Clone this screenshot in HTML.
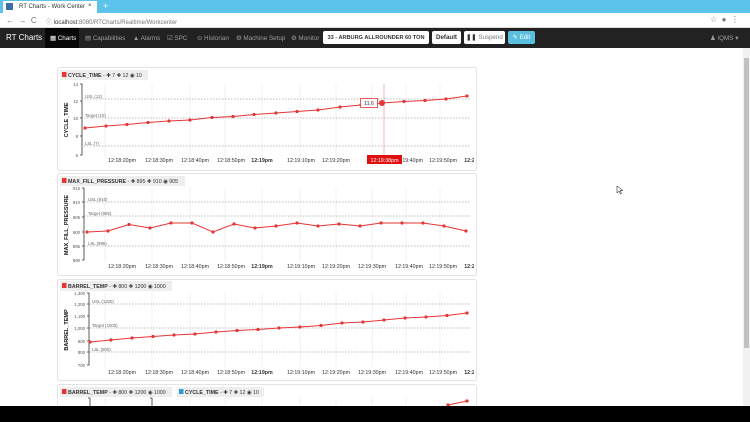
<!DOCTYPE html>
<html><head><meta charset="utf-8"><style>
*{margin:0;padding:0;box-sizing:border-box}
body{width:750px;height:422px;overflow:hidden;background:#fff;font-family:"Liberation Sans",sans-serif;position:relative}
.abs{position:absolute}
.tabbar{left:0;top:0;width:750px;height:13px;background:#5cc3ea}
.tab{left:3px;top:1px;width:94px;height:12px;background:#fff;font-size:6px;color:#333;padding:3px 0 0 16px}
.addr{left:0;top:13px;width:750px;height:15px;background:#fff;border-bottom:1px solid #ddd;font-size:6px;color:#777}
.nav{left:0;top:28px;width:750px;height:20px;background:#222;color:#9d9d9d;font-size:6.3px}
.nav span{position:absolute;top:7px}
.btn{position:absolute;top:3px;height:13px;background:#fff;border-radius:2px;color:#333;font-size:6.2px;font-weight:bold;padding-top:3px;text-align:center;white-space:nowrap}
.scroll{left:743px;top:48px;width:7px;height:358px;background:#f1f1f1}
.black{left:0;top:406px;width:750px;height:16px;background:#000}
</style></head><body>
<div class="abs tabbar"></div>
<div class="abs tab">RT Charts - Work Center<span style="position:absolute;left:85px;top:2px">×</span></div>
<div class="abs" style="left:6px;top:3px;width:7px;height:7px;background:#3a6ea5"></div>
<div class="abs" style="left:103px;top:1px;color:#fff;font-size:9px">+</div>
<div class="abs addr"><span class="abs" style="left:6px;top:3px;font-size:8px">← &nbsp;→ &nbsp;C</span><span class="abs" style="left:46px;top:4px">ⓘ <b style="color:#333;font-weight:normal">localhost</b>:8080/RTCharts/Realtime/Workcenter</span><span class="abs" style="left:710px;top:2px;font-size:8px">☆ &nbsp;● &nbsp;⋮</span></div>
<div class="abs nav">
<span style="left:6px;top:5px;color:#fff;font-size:8px">RT Charts</span>
<div class="abs" style="left:45px;top:0;width:34px;height:20px;background:#080808"></div>
<span style="left:50px;color:#fff">▦ Charts</span>
<span style="left:85px">▤ Capabilities</span>
<span style="left:133px">▲ Alarms</span>
<span style="left:167px">☑ SPC</span>
<span style="left:197px">⊙ Historian</span>
<span style="left:236px">⚙ Machine Setup</span>
<span style="left:291px">⚙ Monitor</span>
<div class="btn" style="left:323px;width:106px;font-size:5.6px;padding-top:3.5px">33 - ARBURG ALLROUNDER 60 TON</div>
<div class="btn" style="left:432px;width:29px">Default</div>
<div class="btn" style="left:464px;width:41px;font-weight:normal;color:#777"><b style="color:#333">❚❚</b> Suspend</div>
<div class="btn" style="left:508px;width:27px;background:#5bc0de;color:#fff;font-weight:normal">✎ Edit</div>
<span style="left:710px">♟ IQMS ▾</span>
</div>
<div class="abs scroll"><div style="position:absolute;left:1px;top:10px;width:5px;height:290px;background:#c1c1c1"></div></div>
<svg class="abs" style="left:0;top:0" width="750" height="406" font-family="Liberation Sans, sans-serif">
<defs><marker id="m" markerWidth="4" markerHeight="4" refX="2" refY="2" markerUnits="userSpaceOnUse"><circle cx="2" cy="2" r="1.6" fill="#e53535"/></marker>
<clipPath id="c"><rect x="0" y="0" width="474" height="406"/></clipPath></defs>
<g fill="#fff" stroke="#e4e4e4">
<rect x="57.5" y="67.5" width="419" height="103" rx="2"/>
<rect x="57.5" y="173.5" width="419" height="102" rx="2"/>
<rect x="57.5" y="279.5" width="419" height="101" rx="2"/>
<rect x="57.5" y="384.5" width="419" height="30" rx="2"/>
</g>
<g font-size="5.3" fill="#333">
<rect x="60" y="70" width="88" height="10" fill="#eee"/><rect x="62" y="72" width="4.5" height="5" fill="#e53535"/>
<text x="68" y="77"><tspan font-weight="bold">CYCLE_TIME</tspan> - ✚ 7 ✚ 12 ◉ 10</text>
<rect x="60" y="176" width="125" height="10" fill="#eee"/><rect x="62" y="178" width="4.5" height="5" fill="#e53535"/>
<text x="68" y="183"><tspan font-weight="bold">MAX_FILL_PRESSURE</tspan> - ✚ 895 ✚ 910 ◉ 905</text>
<rect x="60" y="281" width="112" height="10" fill="#eee"/><rect x="62" y="283" width="4.5" height="5" fill="#e53535"/>
<text x="68" y="288"><tspan font-weight="bold">BARREL_TEMP</tspan> - ✚ 800 ✚ 1200 ◉ 1000</text>
<rect x="60" y="387" width="112" height="10" fill="#eee"/><rect x="62" y="389" width="4.5" height="5" fill="#e53535"/>
<text x="68" y="394"><tspan font-weight="bold">BARREL_TEMP</tspan> - ✚ 800 ✚ 1200 ◉ 1000</text>
<rect x="177" y="387" width="87" height="10" fill="#eee"/><rect x="179" y="389" width="4.5" height="5" fill="#2a9fd6"/>
<text x="185" y="394"><tspan font-weight="bold">CYCLE_TIME</tspan> - ✚ 7 ✚ 12 ◉ 10</text>
</g>
<g stroke="#f0f0f0">
<path d="M105 84V158M152 84V158M190 84V158M225 84V158M262 84V158M300 84V158M336 84V158M372 84V158M406 84V158M440 84V158"/>
<path d="M105 188V262M152 188V262M190 188V262M225 188V262M262 188V262M300 188V262M336 188V262M372 188V262M406 188V262M440 188V262"/>
<path d="M105 293V367M152 293V367M190 293V367M225 293V367M262 293V367M300 293V367M336 293V367M372 293V367M406 293V367M440 293V367"/>
<path d="M105 398V406M152 398V406M190 398V406M225 398V406M262 398V406M300 398V406M336 398V406M372 398V406M406 398V406M440 398V406"/>
</g>
<g stroke="#bbb" stroke-dasharray="1.5,1.5">
<path d="M84 99H470M84 118H470M84 146H470"/>
<path d="M84 202H470M84 216H470M84 246H470"/>
<path d="M90 304H470M90 328H470M90 352H470"/>
</g>
<g fill="#666" font-size="4.3">
<text x="85" y="98">USL (12)</text><text x="85" y="117">Target (10)</text><text x="85" y="145">LSL (7)</text>
<text x="88" y="201">USL (910)</text><text x="88" y="215">Target (905)</text><text x="88" y="245">LSL (895)</text>
<text x="92" y="303">USL (1200)</text><text x="92" y="327">Target (1000)</text><text x="92" y="351">LSL (800)</text>
</g>
<g stroke="#333" stroke-width="0.8" fill="none">
<path d="M80 84H82V155H80M82 101H80M82 118H80M82 136H80"/>
<path d="M82 188H84V260H82M84 202H82M84 217H82M84 232H82M84 246H82"/>
<path d="M87 293H89V365H87M89 304H87M89 316H87M89 328H87M89 341H87M89 352H87"/>
<path d="M88 398H90V406M150 398H152V406"/>
</g>
<g fill="#555" font-size="4.3" text-anchor="end">
<text x="78" y="86">14</text><text x="78" y="103">12</text><text x="78" y="120">10</text><text x="78" y="138">8</text><text x="78" y="157">6</text>
<text x="80" y="190">915</text><text x="80" y="204">910</text><text x="80" y="219">905</text><text x="80" y="234">900</text><text x="80" y="248">895</text><text x="80" y="262">890</text>
<text x="85" y="295">1,300</text><text x="85" y="306">1,200</text><text x="85" y="318">1,100</text><text x="85" y="330">1,000</text><text x="85" y="343">900</text><text x="85" y="354">800</text><text x="85" y="367">700</text>
</g>
<g fill="#111" font-size="5.5" font-weight="bold">
<text transform="translate(68,120) rotate(-90)" text-anchor="middle">CYCLE_TIME</text>
<text transform="translate(68,225) rotate(-90)" text-anchor="middle">MAX_FILL_PRESSURE</text>
<text transform="translate(68,330) rotate(-90)" text-anchor="middle">BARREL_TEMP</text>
</g>
<g fill="#333" font-size="5.3" text-anchor="middle" clip-path="url(#c)">
<text x="122" y="162">12:18:20pm</text><text x="159" y="162">12:18:30pm</text><text x="195" y="162">12:18:40pm</text><text x="231" y="162">12:18:50pm</text><text x="262" y="162" font-weight="bold">12:19pm</text><text x="301" y="162">12:19:10pm</text><text x="336" y="162">12:19:20pm</text><text x="409" y="162">12:19:40pm</text><text x="443" y="162">12:19:50pm</text><text x="471" y="162" font-weight="bold">12:20</text>
<text x="122" y="268">12:18:20pm</text><text x="159" y="268">12:18:30pm</text><text x="195" y="268">12:18:40pm</text><text x="231" y="268">12:18:50pm</text><text x="262" y="268" font-weight="bold">12:19pm</text><text x="301" y="268">12:19:10pm</text><text x="336" y="268">12:19:20pm</text><text x="372" y="268">12:19:30pm</text><text x="409" y="268">12:19:40pm</text><text x="443" y="268">12:19:50pm</text><text x="471" y="268" font-weight="bold">12:20</text>
<text x="122" y="374">12:18:20pm</text><text x="159" y="374">12:18:30pm</text><text x="195" y="374">12:18:40pm</text><text x="231" y="374">12:18:50pm</text><text x="262" y="374" font-weight="bold">12:19pm</text><text x="301" y="374">12:19:10pm</text><text x="336" y="374">12:19:20pm</text><text x="372" y="374">12:19:30pm</text><text x="409" y="374">12:19:40pm</text><text x="443" y="374">12:19:50pm</text><text x="471" y="374" font-weight="bold">12:20</text>
</g>
<g fill="none" stroke="#e53535" stroke-width="1" marker-start="url(#m)" marker-mid="url(#m)" marker-end="url(#m)">
<polyline points="85,128 106,126 127,124.5 148,122.5 169,121 190,120 212,117.5 233,116.5 254,114.5 276,113 297,111.5 318,110 340,107 361,105 382,103 404,101.5 425,100.5 446,99 467,96"/>
<polyline points="87,232 108,231 129,224.5 150,228 171,223 192,223 213,232 234,224 255,228 276,226 297,223 318,226 339,224 360,226 381,223 402,223 423,223 444,226 466,231"/>
<polyline points="90,342 111,340 132,338 153,336.5 174,335 195,334 216,332 237,330.5 258,329.5 279,328 300,327 321,325.5 342,323 363,322 384,320 405,318 426,317 447,315.5 467,313"/>
<polyline points="448,405 467,401"/>
</g>
<path d="M384 84V160" stroke="#e08a8a" stroke-width="0.6"/>
<circle cx="382" cy="103" r="3" fill="#e53535"/>
<rect x="360.5" y="98.5" width="17" height="9" fill="#fff" stroke="#e53535" stroke-width="0.8"/>
<text x="369" y="105" font-size="5.3" fill="#333" text-anchor="middle">11.6</text>
<rect x="367" y="155" width="35" height="9" fill="#e01010"/>
<text x="384.5" y="162" font-size="5.3" fill="#fff" text-anchor="middle">12:19:38pm</text>
<path d="M617 186l0 7 2-2 1.5 3 1-.5-1.5-3 3 0z" fill="#fff" stroke="#000" stroke-width="0.5"/>
</svg>
<div class="abs black"></div>
</body></html>
